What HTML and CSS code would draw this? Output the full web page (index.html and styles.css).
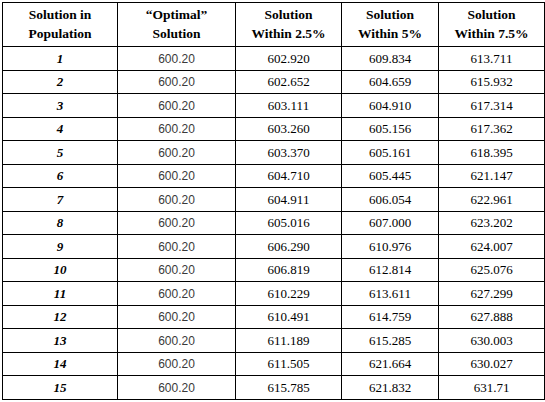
FILE: index.html
```html
<!DOCTYPE html>
<html>
<head>
<meta charset="utf-8">
<link rel="stylesheet" href="styles.css">
</head>
<body>
<div class="wrap">
<table class="grid">
  <colgroup>
    <col class="c1"><col class="c2"><col class="c3"><col class="c4"><col class="c5">
  </colgroup>
  <thead>
    <tr class="head">
      <th>Solution in<br>Population</th>
      <th>“Optimal”<br>Solution</th>
      <th>Solution<br>Within 2.5%</th>
      <th>Solution<br>Within 5%</th>
      <th>Solution<br>Within 7.5%</th>
    </tr>
  </thead>
  <tbody>
    <tr><td class="n">1</td><td class="opt">600.20</td><td>602.920</td><td>609.834</td><td>613.711</td></tr>
    <tr><td class="n">2</td><td class="opt">600.20</td><td>602.652</td><td>604.659</td><td>615.932</td></tr>
    <tr><td class="n">3</td><td class="opt">600.20</td><td>603.111</td><td>604.910</td><td>617.314</td></tr>
    <tr><td class="n">4</td><td class="opt">600.20</td><td>603.260</td><td>605.156</td><td>617.362</td></tr>
    <tr><td class="n">5</td><td class="opt">600.20</td><td>603.370</td><td>605.161</td><td>618.395</td></tr>
    <tr><td class="n">6</td><td class="opt">600.20</td><td>604.710</td><td>605.445</td><td>621.147</td></tr>
    <tr><td class="n">7</td><td class="opt">600.20</td><td>604.911</td><td>606.054</td><td>622.961</td></tr>
    <tr><td class="n">8</td><td class="opt">600.20</td><td>605.016</td><td>607.000</td><td>623.202</td></tr>
    <tr><td class="n">9</td><td class="opt">600.20</td><td>606.290</td><td>610.976</td><td>624.007</td></tr>
    <tr><td class="n">10</td><td class="opt">600.20</td><td>606.819</td><td>612.814</td><td>625.076</td></tr>
    <tr><td class="n">11</td><td class="opt">600.20</td><td>610.229</td><td>613.611</td><td>627.299</td></tr>
    <tr><td class="n">12</td><td class="opt">600.20</td><td>610.491</td><td>614.759</td><td>627.888</td></tr>
    <tr><td class="n">13</td><td class="opt">600.20</td><td>611.189</td><td>615.285</td><td>630.003</td></tr>
    <tr><td class="n">14</td><td class="opt">600.20</td><td>611.505</td><td>621.664</td><td>630.027</td></tr>
    <tr><td class="n">15</td><td class="opt">600.20</td><td>615.785</td><td>621.832</td><td>631.71</td></tr>
  </tbody>
</table>
</div>
</body>
</html>
```
FILE: styles.css
```css
html, body {
  margin: 0;
  padding: 0;
  background: #fff;
}
.wrap {
  padding: 2px;
}
.grid {
  border-collapse: collapse;
  table-layout: fixed;
  width: 542px;
  font-family: "Liberation Serif", "Times New Roman", serif;
  font-size: 13px;
  color: #000;
}
.c1 { width: 115px; }
.c2 { width: 118px; }
.c3 { width: 106px; }
.c4 { width: 97px; }
.c5 { width: 106px; }
.grid th, .grid td {
  border: 1px solid #000;
  text-align: center;
  padding: 0 4px;
}
.grid th {
  font-weight: bold;
  font-size: 13.5px;
  line-height: 19px;
  height: 41px;
  padding-top: 0;
  padding-bottom: 2px;
}
.grid td {
  height: 21.5px;
  line-height: 16px;
  padding-top: 1px;
  padding-bottom: 0;
}
.grid td.n {
  font-style: italic;
  font-weight: bold;
}
.grid td.opt {
  font-family: "Liberation Sans", Arial, sans-serif;
  font-size: 12px;
  color: #3a3a3a;
}
```
